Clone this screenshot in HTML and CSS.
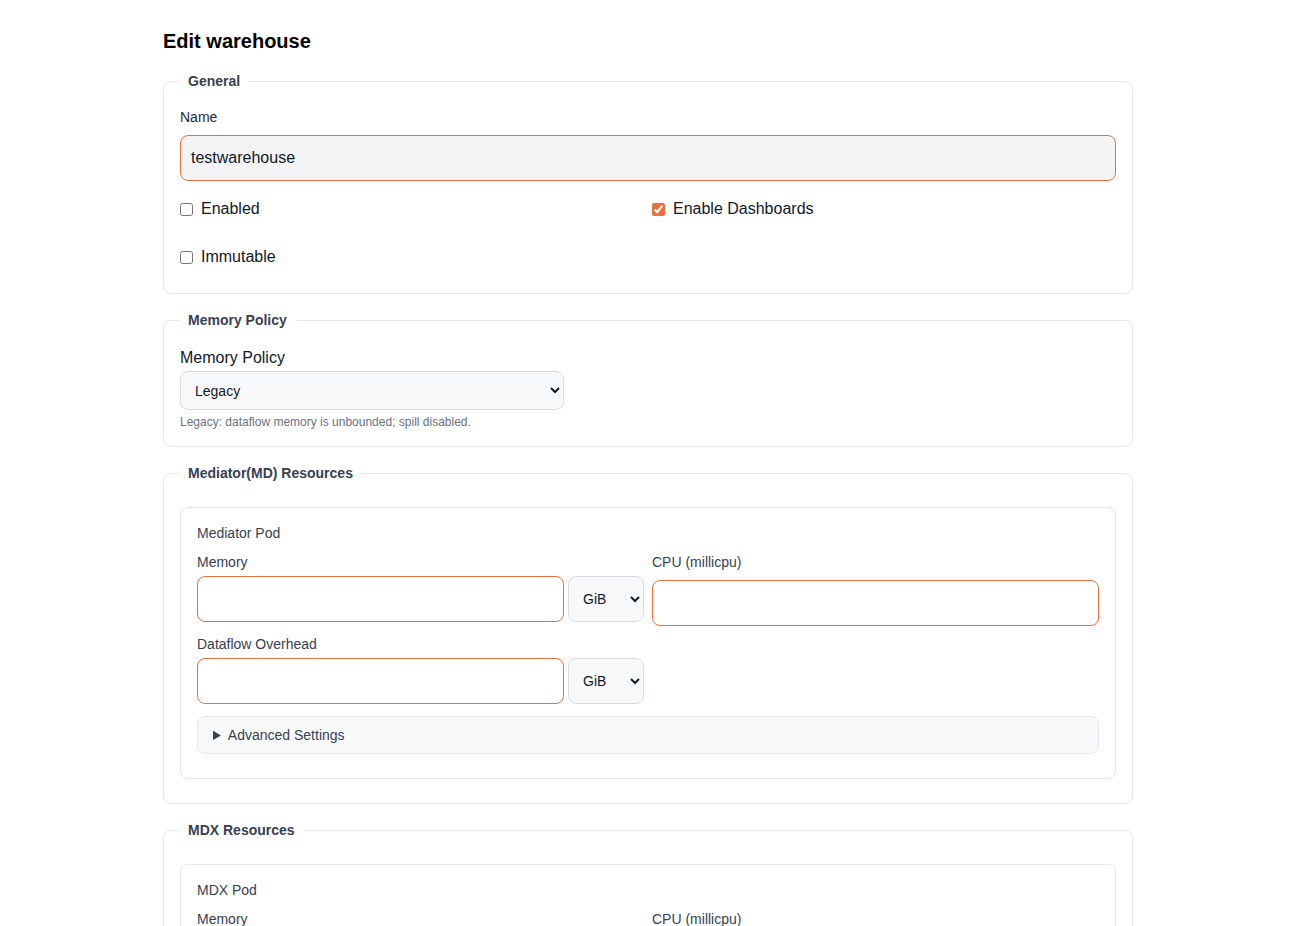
FILE: index.html
```
<html>
    <head>
        <link rel="stylesheet" href="styles.css">
    </head>
    <body>
        <div class="page">
            <h1 class="pageTitle">Edit warehouse</h1>

            <fieldset class="section">
                <legend>General</legend>
                <label class="fieldLabel" for="name">Name</label>
                <input type="text" id="name" class="textInput nameInput" value="testwarehouse">
                <div class="checks">
                    <label class="check"><input type="checkbox">Enabled</label>
                    <label class="check"><input type="checkbox" checked>Enable Dashboards</label>
                    <label class="check"><input type="checkbox">Immutable</label>
                </div>
            </fieldset>

            <fieldset class="section">
                <legend>Memory Policy</legend>
                <label class="policyLabel" for="policy">Memory Policy</label>
                <select id="policy" class="policySelect">
                    <option>Legacy</option>
                </select>
                <div class="help">Legacy: dataflow memory is unbounded; spill disabled.</div>
            </fieldset>

            <fieldset class="section">
                <legend>Mediator(MD) Resources</legend>
                <div class="pod">
                    <div class="podTitle">Mediator Pod</div>
                    <div class="podGrid">
                        <div>
                            <div class="field">
                                <label class="smallLabel">Memory</label>
                                <div class="unitRow">
                                    <input type="text" class="textInput">
                                    <select class="unitSelect"><option>GiB</option></select>
                                </div>
                            </div>
                            <div class="field">
                                <label class="smallLabel">Dataflow Overhead</label>
                                <div class="unitRow">
                                    <input type="text" class="textInput">
                                    <select class="unitSelect"><option>GiB</option></select>
                                </div>
                            </div>
                        </div>
                        <div>
                            <div class="field">
                                <label class="smallLabel cpuLabel">CPU (millicpu)</label>
                                <input type="text" class="textInput">
                            </div>
                        </div>
                    </div>
                    <details class="advanced">
                        <summary>Advanced Settings</summary>
                    </details>
                </div>
            </fieldset>

            <fieldset class="section">
                <legend>MDX Resources</legend>
                <div class="pod">
                    <div class="podTitle">MDX Pod</div>
                    <div class="podGrid">
                        <div>
                            <div class="field">
                                <label class="smallLabel">Memory</label>
                                <div class="unitRow">
                                    <input type="text" class="textInput">
                                    <select class="unitSelect"><option>GiB</option></select>
                                </div>
                            </div>
                        </div>
                        <div>
                            <div class="field">
                                <label class="smallLabel cpuLabel">CPU (millicpu)</label>
                                <input type="text" class="textInput">
                            </div>
                        </div>
                    </div>
                    <details class="advanced">
                        <summary>Advanced Settings</summary>
                    </details>
                </div>
            </fieldset>
        </div>
    </body>
</html>
```

FILE: styles.css
```
body {
    margin: 0;
    background: #ffffff;
    font-family: "Liberation Sans", Arial, sans-serif;
    color: #111827;
}
.page {
    width: 970px;
    margin-left: calc(50% - 482px);
    padding-bottom: 40px;
}
.pageTitle {
    font-size: 20px;
    line-height: 24px;
    margin: 29px 0 20px 0;
    color: #000;
}
.section {
    border: 1px solid #e5e7eb;
    border-radius: 8px;
    padding: 18px 16px 16px 16px;
    margin: 0 0 18px 0;
    min-width: 0;
}
.section legend {
    padding: 0 8px;
    font-size: 14px;
    line-height: 16px;
    font-weight: bold;
    color: #374151;
}
.fieldLabel {
    display: block;
    font-size: 14px;
    line-height: 20px;
    margin-bottom: 8px;
    color: #1f2937;
}
.textInput {
    display: block;
    width: 100%;
    box-sizing: border-box;
    height: 46px;
    padding: 12px 10px;
    font-family: inherit;
    font-size: 16px;
    border: 1px solid #e8703f;
    border-radius: 8px;
    background: #ffffff;
    color: #111827;
    outline: none;
}
.nameInput {
    background: #f3f4f6;
}
.checks {
    display: grid;
    grid-template-columns: 1fr 1fr;
    column-gap: 8px;
    row-gap: 4px;
    margin: 6px 0 -2px 0;
}
.check {
    display: flex;
    align-items: center;
    min-height: 44px;
    font-size: 16px;
    color: #111827;
}
.check input {
    margin: 0 8px 0 0;
    width: 13px;
    height: 13px;
    accent-color: #e8703f;
}
.policyLabel {
    display: block;
    font-size: 16px;
    line-height: 22px;
    margin: 1px 0 2px 0;
    color: #111827;
}
.policySelect {
    display: block;
    width: 384px;
    height: 39px;
    padding: 0 10px;
    font-family: inherit;
    font-size: 14px;
    color: #111827;
    background: #f8f9fa;
    border: 1px solid #d8dce1;
    border-radius: 8px;
}
.help {
    margin-top: 4px;
    font-size: 12px;
    line-height: 16px;
    color: #6b7280;
}
.pod {
    border: 1px solid #e5e7eb;
    border-radius: 8px;
    padding: 15px 16px 16px 16px;
    margin: 8px 0;
}
.podTitle {
    font-size: 14px;
    line-height: 20px;
    color: #374151;
    margin-bottom: 9px;
}
.podGrid {
    display: grid;
    grid-template-columns: 1fr 1fr;
    column-gap: 8px;
}
.field {
    margin-bottom: 12px;
}
.smallLabel {
    display: block;
    font-size: 14px;
    line-height: 20px;
    color: #374151;
    margin-bottom: 4px;
}
.cpuLabel {
    margin-bottom: 8px;
}
.unitRow {
    display: flex;
    gap: 4px;
}
.unitRow .textInput {
    flex: 1;
    min-width: 0;
}
.unitSelect {
    width: 76px;
    height: 46px;
    flex: none;
    padding: 0 6px 0 10px;
    font-family: inherit;
    font-size: 14px;
    color: #111827;
    background: #f8f9fa;
    border: 1px solid #d8dce1;
    border-radius: 8px;
}
.advanced {
    border: 1px solid #e5e7eb;
    border-radius: 8px;
    background: #f8f9fa;
    margin-bottom: 8px;
}
.advanced summary {
    padding: 8px 15px;
    font-size: 14px;
    line-height: 20px;
    color: #374151;
    cursor: pointer;
}
```
